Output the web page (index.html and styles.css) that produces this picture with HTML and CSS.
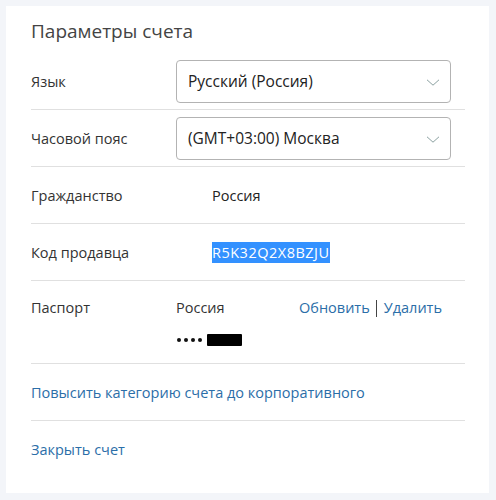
FILE: index.html
```html
<!DOCTYPE html>
<html lang="ru">
<head>
<meta charset="utf-8">
<link rel="stylesheet" href="styles.css">
</head>
<body>
<div class="card">
  <h1 class="title">Параметры счета</h1>
  <div class="row">
    <div class="label">Язык</div>
    <div class="select"><span>Русский (Россия)</span>
      <svg class="chev" width="14" height="7" viewBox="0 0 14 7"><path d="M1 0.8 L7 6.2 L13 0.8" fill="none" stroke="#8aa0a0" stroke-width="1"/></svg>
    </div>
  </div>
  <div class="row">
    <div class="label">Часовой пояс</div>
    <div class="select"><span>(GMT+03:00) Москва</span>
      <svg class="chev" width="14" height="7" viewBox="0 0 14 7"><path d="M1 0.8 L7 6.2 L13 0.8" fill="none" stroke="#8aa0a0" stroke-width="1"/></svg>
    </div>
  </div>
  <div class="row">
    <div class="label">Гражданство</div>
    <div class="value indent">Россия</div>
  </div>
  <div class="row">
    <div class="label">Код продавца</div>
    <div class="value indent"><span class="sel">R5K32Q2X8BZJU</span></div>
  </div>
  <div class="row passport">
    <div class="label">Паспорт</div>
    <div class="pvalue">
      <div class="pline">
        <span>Россия</span>
        <span class="actions"><a class="link">Обновить</a><span class="bar"></span><a class="link">Удалить</a></span>
      </div>
      <div class="masked"><span class="dot"></span><span class="dot"></span><span class="dot"></span><span class="dot"></span><span class="blk"></span></div>
    </div>
  </div>
  <div class="row">
    <a class="link">Повысить категорию счета до корпоративного</a>
  </div>
  <div class="row last">
    <a class="link">Закрыть счет</a>
  </div>
</div>
</body>
</html>
```

FILE: styles.css
```css
html, body { margin: 0; padding: 0; }
body {
  background: #f3f5f9;
  font-family: "Segoe UI", "Open Sans", "Noto Sans", sans-serif;
  color: #333;
  font-size: 14.5px;
  padding: 6px 7px 7px 6px;
}
.card {
  background: #fff;
  padding: 10px 24px 17px 25px;
  height: 460px;
}
.title {
  font-size: 19px;
  font-weight: 400;
  color: #444;
  margin: 0 0 7px 0;
  line-height: 30px;
}
.row {
  display: flex;
  align-items: center;
  min-height: 56px;
  border-bottom: 1px solid #e0e0e0;
}
.row.last { border-bottom: none; }
.label {
  width: 145px;
  flex: none;
  color: #333;
}
.select {
  flex: 1;
  height: 41px;
  margin-right: 14px;
  border: 1px solid #b3b3b3;
  border-radius: 4px;
  display: flex;
  align-items: center;
  justify-content: space-between;
  padding: 0 10px 0 11px;
  color: #222;
  font-size: 15.5px;
}
.chev { margin-top: 2px; }
.value.indent { padding-left: 36px; color: #222; }
.sel { background: #3391ff; color: #fff; padding: 1px 0; letter-spacing: 0.5px; }
.passport {
  align-items: flex-start;
  min-height: 83px;
  padding-top: 16px;
  box-sizing: border-box;
}
.passport .label { line-height: 22px; }
.pvalue { flex: 1; display: flex; flex-direction: column; }
.pline { display: flex; line-height: 22px; }
.pline > span:first-child { width: 123px; }
.actions { display: flex; align-items: center; }
.bar { width: 1px; height: 17px; background: #444; margin: 0 7px 0 6px; }
.link { color: #2b6ea8; text-decoration: none; cursor: pointer; }
.masked { display: flex; align-items: center; margin-top: 15px; height: 12px; padding-left: 1px; }
.dot { width: 4px; height: 4px; border-radius: 50%; background: #111; margin-right: 3px; }
.blk { display: inline-block; width: 35px; height: 12px; background: #000; margin-left: 2px; border-radius: 1px; }
```
